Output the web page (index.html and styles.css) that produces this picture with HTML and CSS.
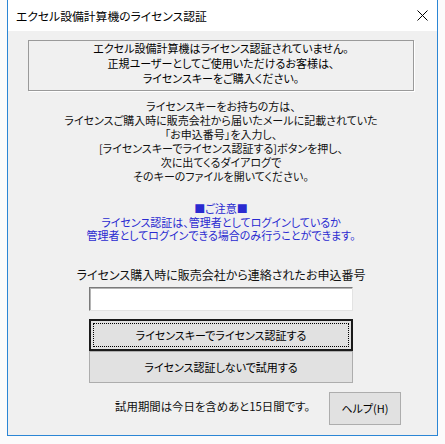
FILE: index.html
```html
<!DOCTYPE html>
<html lang="ja">
<head>
    <meta charset="UTF-8">
    <meta name="viewport" content="width=device-width, initial-scale=1.0">
    <title>エクセル設備計算機のライセンス認証</title>
    <link rel="stylesheet" href="styles.css">
</head>
<body>
    <div class="window">
        <div class="titlebar">
            <span class="title">エクセル設備計算機のライセンス認証</span>
            <span class="close">
                <svg width="11" height="11" viewBox="0 0 11 11">
                    <path d="M0.5 0.5 L10.5 10.5 M10.5 0.5 L0.5 10.5" stroke="#000" stroke-width="1" fill="none"/>
                </svg>
            </span>
        </div>

        <div class="content">
            <!-- 未認証メッセージ -->
            <div class="notice-box">
                エクセル設備計算機はライセンス認証されていません。<br>
                正規ユーザーとしてご使用いただけるお客様は、<br>
                ライセンスキーをご購入ください。
            </div>

            <div class="guide">
                ライセンスキーをお持ちの方は、<br>
                ライセンスご購入時に販売会社から届いたメールに記載されていた<br>
                「お申込番号」を入力し、<br>
                [ライセンスキーでライセンス認証する]ボタンを押し、<br>
                次に出てくるダイアログで<br>
                そのキーのファイルを開いてください。
            </div>

            <div class="caution">
                ■ご注意■<br>
                ライセンス認証は、管理者としてログインしているか<br>
                管理者としてログインできる場合のみ行うことができます。
            </div>

            <label class="order-label" for="orderNo">ライセンス購入時に販売会社から連絡されたお申込番号</label>
            <input type="text" id="orderNo" class="order-input">

            <div class="button-stack">
                <button type="button" class="btn btn-default">ライセンスキーでライセンス認証する</button>
                <button type="button" class="btn">ライセンス認証しないで試用する</button>
            </div>

            <div class="footer-row">
                <span class="trial">試用期間は今日を含めあと15日間です。</span>
                <button type="button" class="btn btn-help">ヘルプ(H)</button>
            </div>
        </div>
    </div>
</body>
</html>
```

FILE: styles.css
```css
body {
    margin: 0;
    padding: 0;
    background-color: #fbfbfb;
    font-family: "Noto Sans CJK JP", "Noto Sans", sans-serif;
    font-size: 11px;
    font-feature-settings: "palt";
    color: #111;
}

.window {
    margin-left: 7px;
    width: 429px;
    height: 435px;
    border: 1px solid #2b86d5;
    border-top: none;
    background-color: #f0f0f0;
}

.titlebar {
    height: 31px;
    background-color: #fff;
    display: flex;
    align-items: center;
    justify-content: space-between;
    padding-left: 8px;
}

.title {
    font-size: 11.8px;
    color: #000;
}

.close {
    display: flex;
    width: 20px;
    justify-content: flex-start;
}

.content {
    padding: 9px 23px 0 20px;
    display: flex;
    flex-direction: column;
    align-items: center;
}

.notice-box {
    align-self: stretch;
    border: 1px solid #9a9a9a;
    box-shadow: 1px 1px 0 #fff;
    text-align: center;
    line-height: 15px;
    padding: 0 0 4px;
    color: #000;
}

.guide {
    margin-top: 8px;
    text-align: center;
    line-height: 14px;
}

.caution {
    margin-top: 19px;
    text-align: center;
    line-height: 13.5px;
    color: #2a2ad0;
}

.order-label {
    margin-top: 25px;
    line-height: 14px;
    font-size: 12px;
}

.order-input {
    margin-top: 5px;
    width: 264px;
    height: 24px;
    box-sizing: border-box;
    background-color: #fff;
    border: 1px solid;
    border-color: #7a7a7a #e3e3e3 #e3e3e3 #7a7a7a;
    box-shadow: inset 1px 1px 0 #b4b4b4;
    outline: none;
}

.button-stack {
    margin-top: 8px;
    display: flex;
    flex-direction: column;
}

.btn {
    font-family: inherit;
    font-size: 11px;
    font-feature-settings: "palt";
    color: #000;
    background-color: #e1e1e1;
    border: 1px solid #adadad;
    padding: 0;
    margin: 0;
    width: 264px;
    height: 32px;
    box-sizing: border-box;
}

.btn-default {
    position: relative;
    border: 2px solid #1a1a1a;
}

.btn-default::after {
    content: "";
    position: absolute;
    left: 2px;
    top: 2px;
    right: 2px;
    bottom: 2px;
    border: 1px dotted #000;
}

.footer-row {
    margin-top: 9px;
    align-self: stretch;
    display: flex;
    align-items: center;
    justify-content: flex-end;
    padding-right: 13px;
}

.trial {
    margin-right: 19px;
    font-size: 11.4px;
    position: relative;
    top: -2px;
}

.btn-help {
    width: 72px;
    height: 33px;
}
```
